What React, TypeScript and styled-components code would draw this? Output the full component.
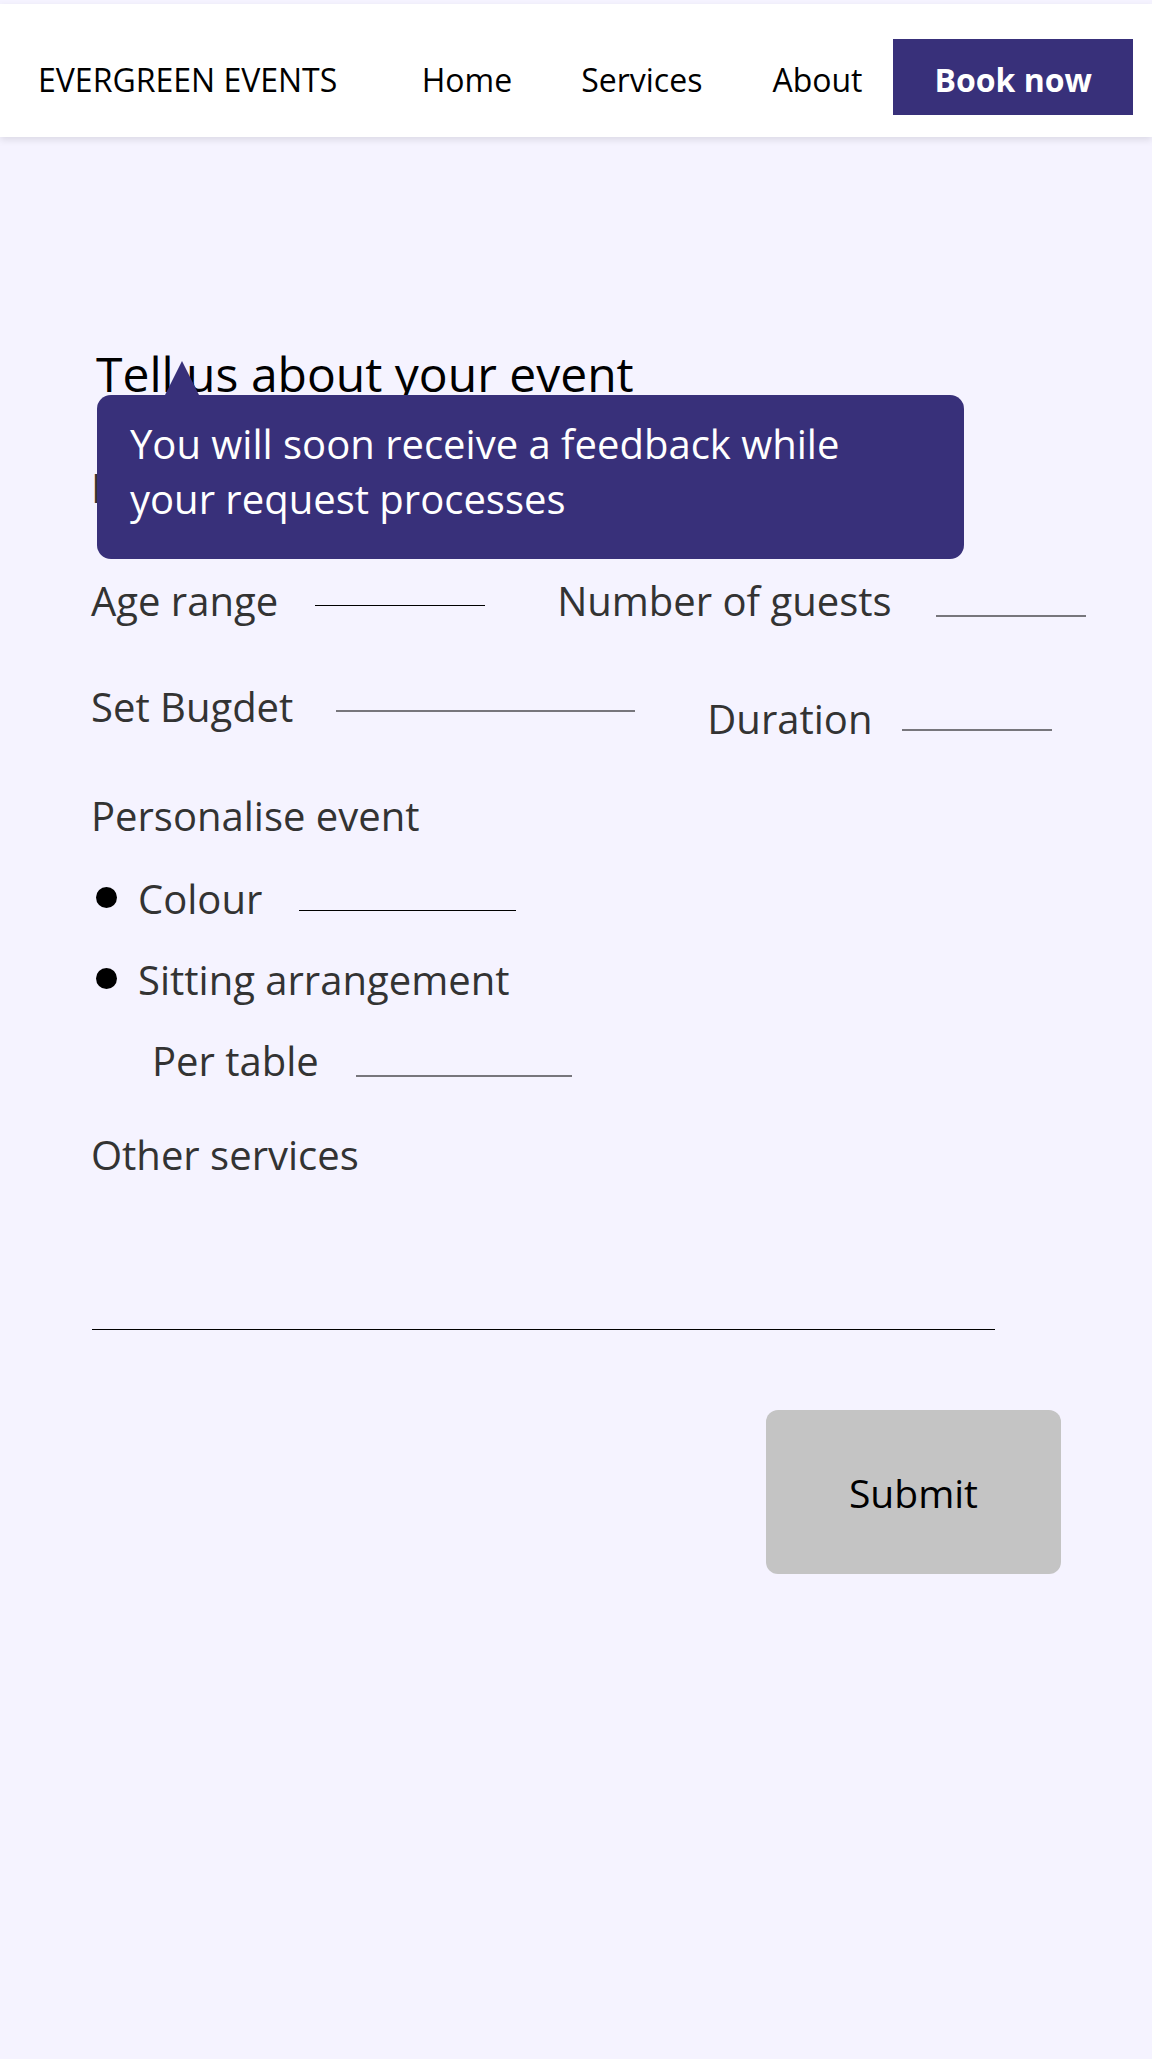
import React from "react";
import styled, { createGlobalStyle } from "styled-components";

const GlobalStyle = createGlobalStyle`
  html, body {
    margin: 0;
    padding: 0;
    background: #f5f3ff;
  }
  body {
    font-family: "Open Sans", "Noto Sans", Arial, sans-serif;
    min-height: 2059px;
  }
  * { box-sizing: border-box; }
`;

const PURPLE = "#38307a";
const GREY_LINE = "#77767c";

const Page = styled.div`
  min-height: 2059px;
  background: #f5f3ff;
  padding-top: 4px;
`;

const Nav = styled.nav`
  height: 133px;
  background: #ffffff;
  box-shadow: 0 3px 7px rgba(0, 0, 0, 0.1);
  display: flex;
  align-items: baseline;
  padding: 35px 19px 0 38px;
  position: relative;
  z-index: 2;
`;

const Logo = styled.div`
  font-size: 32px;
  color: #000;
`;

const NavLinks = styled.div`
  margin-left: auto;
  display: flex;
  align-items: baseline;
`;

const NavLink = styled.a<{ $mr: number }>`
  font-size: 32px;
  color: #000;
  text-decoration: none;
  margin-right: ${(p) => p.$mr}px;
`;

const BookButton = styled.button`
  font-family: inherit;
  font-size: 32px;
  font-weight: 700;
  color: #fff;
  background: ${PURPLE};
  border: none;
  border-radius: 0;
  padding: 19px 41px 14px;
  line-height: normal;
  cursor: pointer;
`;

const Main = styled.main`
  padding: 204px 0 0 91px;
`;

const Intro = styled.section`
  position: relative;
`;

const Heading = styled.h1`
  margin: 0 0 0 5px;
  font-size: 48px;
  font-weight: 400;
  color: #000;
  line-height: normal;
`;

const Tooltip = styled.div`
  position: absolute;
  top: 54px;
  left: 6px;
  width: 867px;
  height: 164px;
  background: ${PURPLE};
  border-radius: 14px;
  color: #fff;
  font-size: 40px;
  line-height: 55px;
  padding: 21px 80px 0 33px;
  z-index: 3;

  &::before {
    content: "";
    position: absolute;
    top: -34px;
    left: 68px;
    width: 0;
    height: 0;
    border-left: 17px solid transparent;
    border-right: 17px solid transparent;
    border-bottom: 34px solid ${PURPLE};
  }
`;

const Row = styled.div<{ $mt: number; $ml?: number }>`
  display: flex;
  align-items: flex-start;
  margin-top: ${(p) => p.$mt}px;
  margin-left: ${(p) => p.$ml ?? 0}px;
`;

const Field = styled.div<{ $gap: number; $ml?: number; $mt?: number }>`
  display: flex;
  align-items: flex-start;
  gap: ${(p) => p.$gap}px;
  margin-left: ${(p) => p.$ml ?? 0}px;
  margin-top: ${(p) => p.$mt ?? 0}px;
`;

const Label = styled.span`
  font-size: 40px;
  color: #333333;
  line-height: normal;
  white-space: nowrap;
`;

const Line = styled.span<{ $w: number; $top: number; $dark?: boolean }>`
  display: block;
  width: ${(p) => p.$w}px;
  margin-top: ${(p) => p.$top}px;
  border-top: ${(p) => (p.$dark ? "1px solid #000" : `2px solid ${GREY_LINE}`)};
`;

const Bullet = styled.span`
  display: block;
  width: 21px;
  height: 21px;
  border-radius: 50%;
  background: #000;
  margin: 16px 21px 0 5px;
  flex-shrink: 0;
`;

const TextArea = styled.div`
  width: 903px;
  height: 148px;
  margin-left: 1px;
  border-bottom: 1px solid #000;
`;

const SubmitRow = styled.div`
  width: 970px;
  display: flex;
  justify-content: flex-end;
  margin-top: 80px;
`;

const SubmitButton = styled.button`
  width: 295px;
  height: 164px;
  background: #c4c4c4;
  border: none;
  border-radius: 12px;
  font-family: inherit;
  font-size: 39px;
  color: #000;
  cursor: pointer;
`;

export default function App() {
  return (
    <>
      <GlobalStyle />
      <Page>
        <Nav>
          <Logo>EVERGREEN EVENTS</Logo>
          <NavLinks>
            <NavLink href="#" $mr={69}>Home</NavLink>
            <NavLink href="#" $mr={70}>Services</NavLink>
            <NavLink href="#" $mr={31}>About</NavLink>
            <BookButton>Book now</BookButton>
          </NavLinks>
        </Nav>
        <Main>
          <Intro>
            <Heading>Tell us about your event</Heading>
            <Tooltip>
              You will soon receive a feedback while your request processes
            </Tooltip>
          </Intro>

          <Row $mt={54}>
            <Field $gap={37}>
              <Label>Event type</Label>
              <Line $w={300} $top={42} />
            </Field>
          </Row>

          <Row $mt={58}>
            <Field $gap={37}>
              <Label>Age range</Label>
              <Line $w={170} $top={32} $dark />
            </Field>
            <Field $gap={44} $ml={72}>
              <Label>Number of guests</Label>
              <Line $w={150} $top={42} />
            </Field>
          </Row>

          <Row $mt={51}>
            <Field $gap={43}>
              <Label>Set Bugdet</Label>
              <Line $w={299} $top={31} />
            </Field>
            <Field $gap={30} $ml={72} $mt={12}>
              <Label>Duration</Label>
              <Line $w={150} $top={38} />
            </Field>
          </Row>

          <Row $mt={42}>
            <Label>Personalise event</Label>
          </Row>

          <Row $mt={28}>
            <Bullet />
            <Field $gap={37}>
              <Label>Colour</Label>
              <Line $w={217} $top={39} $dark />
            </Field>
          </Row>

          <Row $mt={26}>
            <Bullet />
            <Label>Sitting arrangement</Label>
          </Row>

          <Row $mt={26} $ml={61}>
            <Field $gap={37}>
              <Label>Per table</Label>
              <Line $w={216} $top={42} />
            </Field>
          </Row>

          <Row $mt={39}>
            <Label>Other services</Label>
          </Row>
          <TextArea />

          <SubmitRow>
            <SubmitButton>Submit</SubmitButton>
          </SubmitRow>
        </Main>
      </Page>
    </>
  );
}
